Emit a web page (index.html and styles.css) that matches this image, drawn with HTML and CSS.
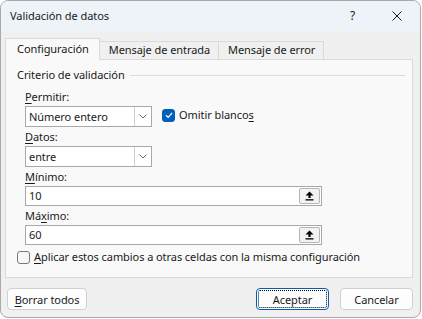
FILE: index.html
```html
<!DOCTYPE html>
<html>
<head>
  <meta charset="utf-8">
  <link rel="stylesheet" href="styles.css">
</head>
<body>
  <div class="window">
    <div class="titlebar">
      <span class="title">Validación de datos</span>
      <span class="caption-btn help">?</span>
      <span class="caption-btn close">
        <svg width="10" height="10" viewBox="0 0 10 10"><path d="M0.5 0.5 L9.5 9.5 M9.5 0.5 L0.5 9.5" stroke="#1a1a1a" stroke-width="1" fill="none"/></svg>
      </span>
    </div>

    <div class="main">
      <div class="tabs">
        <div class="tab active">Configuración</div>
        <div class="tab">Mensaje de entrada</div>
        <div class="tab">Mensaje de error</div>
      </div>

      <div class="panel">
        <div class="group-title"><span>Criterio de validación</span></div>

        <div class="fields">
          <div class="label"><u>P</u>ermitir:</div>
          <div class="row">
            <div class="select">
              <span class="value">Número entero</span>
              <span class="drop"><svg width="8" height="5" viewBox="0 0 8 5"><path d="M0.5 0.5 L4 4 L7.5 0.5" stroke="#6a6a6a" fill="none"/></svg></span>
            </div>
            <label class="check">
              <span class="box checked"><svg width="10" height="10" viewBox="0 0 10 10"><path d="M2 5.2 L4.2 7.3 L8.2 2.8" stroke="#fff" stroke-width="1.2" fill="none"/></svg></span>
              <span>Omitir blanco<u>s</u></span>
            </label>
          </div>

          <div class="label"><u>D</u>atos:</div>
          <div class="select">
            <span class="value">entre</span>
            <span class="drop"><svg width="8" height="5" viewBox="0 0 8 5"><path d="M0.5 0.5 L4 4 L7.5 0.5" stroke="#6a6a6a" fill="none"/></svg></span>
          </div>

          <div class="label"><u>M</u>ínimo:</div>
          <div class="input">
            <span class="value">10</span>
            <span class="ref-btn"><svg width="9" height="10" viewBox="0 0 9 10"><path d="M4.5 0.5 L8.5 4.5 L5.6 4.5 L5.6 7 L3.4 7 L3.4 4.5 L0.5 4.5 Z" fill="#000"/><rect x="0.5" y="8.2" width="8" height="1.3" fill="#000"/></svg></span>
          </div>

          <div class="label">Má<u>x</u>imo:</div>
          <div class="input">
            <span class="value">60</span>
            <span class="ref-btn"><svg width="9" height="10" viewBox="0 0 9 10"><path d="M4.5 0.5 L8.5 4.5 L5.6 4.5 L5.6 7 L3.4 7 L3.4 4.5 L0.5 4.5 Z" fill="#000"/><rect x="0.5" y="8.2" width="8" height="1.3" fill="#000"/></svg></span>
          </div>
        </div>

        <label class="check apply">
          <span class="box"></span>
          <span><u>A</u>plicar estos cambios a otras celdas con la misma configuración</span>
        </label>
      </div>

      <div class="footer">
        <button class="btn wide"><u>B</u>orrar todos</button>
        <div class="spacer"></div>
        <button class="btn default">Aceptar</button>
        <button class="btn">Cancelar</button>
      </div>
    </div>
  </div>
</body>
</html>
```

FILE: styles.css
```css
* {
  box-sizing: border-box;
}

body {
  margin: 0;
  background: #ffffff;
  font-family: "Noto Sans", sans-serif;
  font-size: 11px;
  letter-spacing: -0.07px;
  line-height: 16px;
  color: #1a1a1a;
}

u {
  text-decoration: underline;
  text-underline-offset: 2px;
  text-decoration-thickness: 1px;
}

.window {
  width: 421px;
  height: 318px;
  border: 1px solid #a9a9a9;
  border-radius: 8px;
  background: #f0f0f0;
  overflow: hidden;
  display: flex;
  flex-direction: column;
}

/* title bar */
.titlebar {
  height: 30px;
  flex: none;
  background: #eef2f9;
  display: flex;
  align-items: center;
  padding-left: 9px;
}

.title {
  flex: 1;
}

.caption-btn {
  width: 46px;
  height: 30px;
  display: flex;
  align-items: center;
  justify-content: center;
}

.help {
  font-size: 12px;
  padding-left: 3px;
}

/* content */
.main {
  flex: 1;
  padding: 7px 7px 0 4px;
  display: flex;
  flex-direction: column;
}

.tabs {
  display: flex;
  align-items: flex-end;
  height: 21px;
}

.tab {
  height: 18px;
  padding: 0 8px 0 9px;
  border: 1px solid #d9d9d9;
  border-bottom: none;
  margin-left: -1px;
  background: #f0f0f0;
}

.tab.active {
  height: 22px;
  margin-left: 0;
  margin-bottom: -1px;
  padding: 2px 10px 0 11px;
  background: #f9f9f9;
  position: relative;
  z-index: 1;
}

.panel {
  height: 219px;
  border: 1px solid #d9d9d9;
  background: #f9f9f9;
  padding: 7px 7px 0 11px;
}

.group-title {
  display: flex;
  align-items: center;
  gap: 5px;
}

.group-title::after {
  content: "";
  flex: 1;
  border-top: 1px solid #dcdcdc;
}

.fields {
  padding-left: 8px;
  margin-top: 6px;
}

.label {
  margin-bottom: 1px;
}

.row {
  display: flex;
  align-items: flex-start;
}

.select {
  width: 127px;
  height: 21px;
  border: 1px solid #a8a8a8;
  background: #ffffff;
  display: flex;
  align-items: center;
  margin-bottom: 2px;
}

.select .value {
  flex: 1;
  padding-left: 3px;
}

.drop {
  width: 17px;
  height: 19px;
  border-left: 1px solid #cfcfcf;
  display: flex;
  align-items: center;
  justify-content: center;
}

.input {
  width: 297px;
  height: 20px;
  border: 1px solid #a8a8a8;
  background: #ffffff;
  display: flex;
  align-items: center;
  padding: 0 1px 0 3px;
  margin-bottom: 2px;
}

.input .value {
  flex: 1;
}

.ref-btn {
  width: 21px;
  height: 16px;
  border: 1px solid #b4b4b4;
  border-radius: 2px;
  background: #f3f3f3;
  display: flex;
  align-items: center;
  justify-content: center;
}

.check {
  display: flex;
  align-items: center;
  gap: 4px;
  margin-left: 10px;
  margin-top: 1px;
}

.box {
  width: 13px;
  height: 13px;
  border: 1px solid #7a7a7a;
  border-radius: 3px;
  background: #f7f7f7;
  display: flex;
  align-items: center;
  justify-content: center;
}

.box.checked {
  border-color: #005fb8;
  background: #005fb8;
}

.apply {
  margin-left: 0;
  margin-top: 4px;
}

/* buttons */
.footer {
  display: flex;
  padding: 10px 0 0 2px;
  gap: 11px;
}

.spacer {
  flex: 1;
}

.btn {
  flex: none;
  height: 22px;
  width: 73px;
  padding: 0;
  white-space: nowrap;
  font-family: "Noto Sans", sans-serif;
  font-size: 11px;
  letter-spacing: -0.07px;
  color: #1a1a1a;
  background: #fdfdfd;
  border: 1px solid #d0d0d0;
  border-radius: 4px;
}

.btn.wide {
  width: 80px;
}

.btn.default {
  border-color: #005fb8;
  outline: 1px dotted #000000;
  outline-offset: -3px;
}
```
